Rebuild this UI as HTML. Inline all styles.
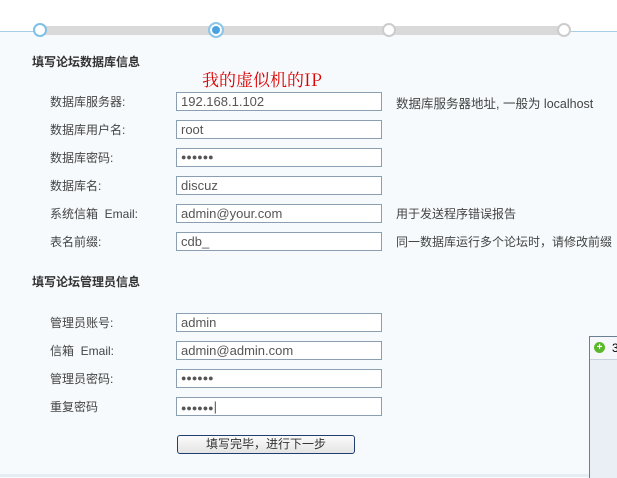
<!DOCTYPE html>
<html><head><meta charset="utf-8"><style>
body{margin:0;width:617px;height:477px;overflow:hidden;background:#fff;font-family:"Liberation Sans","Noto Sans CJK SC",sans-serif;font-size:12px;color:#444;position:relative}
.bg{position:absolute;left:0;top:31px;width:617px;height:446px;background:#f6fafd;border-top:1px solid #a9cde6}
.bar{position:absolute;left:40px;top:26px;width:524px;height:9px;background:#d9d9d9}
.c{position:absolute;width:10px;height:10px;border-radius:50%;background:#fff;border:2px solid #ccc}
.t{position:absolute;white-space:nowrap}
.h{font-weight:bold;color:#333}
.in{position:absolute;left:176px;width:200px;height:17px;border:1px solid #8a9fb2;background:#fff;padding-left:4px;font-size:13px;line-height:17px;color:#555}
.pw{font-size:9px;letter-spacing:0px}
</style></head><body>
<div class="bg"></div>
<div class="bar"></div>
<div class="c" style="left:33px;top:23px;border-color:#7fc0e6"></div>
<div class="c" style="left:208px;top:22px;width:12px;height:12px;border-color:#8cc6ea;background:#4aa3e0;box-shadow:inset 0 0 0 2px #fff"></div>
<div class="c" style="left:382px;top:23px"></div>
<div class="c" style="left:557px;top:23px"></div>
<div class="t h" style="left:32px;top:53px">填写论坛数据库信息</div>
<div class="t" style="left:202px;top:66px;font-size:17px;color:#d00;font-family:'Noto Serif CJK SC','Liberation Serif',serif">我的虚似机的IP</div>
<div class="t" style="left:50px;top:93px">数据库服务器:</div><div class="in" style="top:92px">192.168.1.102</div><div class="t" style="left:396px;top:93px;font-size:12.5px">数据库服务器地址, 一般为 localhost</div>
<div class="t" style="left:50px;top:121px">数据库用户名:</div><div class="in" style="top:120px">root</div>
<div class="t" style="left:50px;top:149px">数据库密码:</div><div class="in pw" style="top:148px">●●●●●●</div>
<div class="t" style="left:50px;top:177px">数据库名:</div><div class="in" style="top:176px">discuz</div>
<div class="t" style="left:50px;top:205px">系统信箱&nbsp; Email:</div><div class="in" style="top:204px">admin@your.com</div><div class="t" style="left:396px;top:205px">用于发送程序错误报告</div>
<div class="t" style="left:50px;top:233px">表名前缀:</div><div class="in" style="top:232px">cdb_</div><div class="t" style="left:396px;top:233px">同一数据库运行多个论坛时，请修改前缀</div>
<div class="t h" style="left:32px;top:273px">填写论坛管理员信息</div>
<div class="t" style="left:50px;top:314px">管理员账号:</div><div class="in" style="top:313px">admin</div>
<div class="t" style="left:50px;top:342px">信箱&nbsp; Email:</div><div class="in" style="top:341px">admin@admin.com</div>
<div class="t" style="left:50px;top:370px">管理员密码:</div><div class="in pw" style="top:369px">●●●●●●</div>
<div class="t" style="left:50px;top:398px">重复密码</div><div class="in pw" style="top:397px">●●●●●●<span style="font-size:13px">|</span></div>
<div style="position:absolute;left:177px;top:435px;width:176px;height:17px;border:1px solid #1f3f72;border-radius:3px;background:linear-gradient(#fbfbfb,#e4e4e4);text-align:center;line-height:17px;font-size:12px;color:#333">填写完毕，进行下一步</div>
<div style="position:absolute;left:0;top:474px;width:617px;height:3px;background:#e6eef5"></div>
<div style="position:absolute;left:589px;top:336px;width:28px;height:141px;border-left:1px solid #6b7f95;border-top:1px solid #6b7f95;background:#e9eff5">
<div style="height:22px;background:#f5f7fa;border-bottom:1px solid #c9d3de"></div>
<div style="position:absolute;left:4px;top:5px;width:11px;height:11px;border-radius:50%;background:#5bb82c;color:#fff;font-size:10px;line-height:11px;text-align:center;font-weight:bold">+</div>
<div class="t" style="left:22px;top:4px;color:#000">3</div>
</div>
</body></html>
